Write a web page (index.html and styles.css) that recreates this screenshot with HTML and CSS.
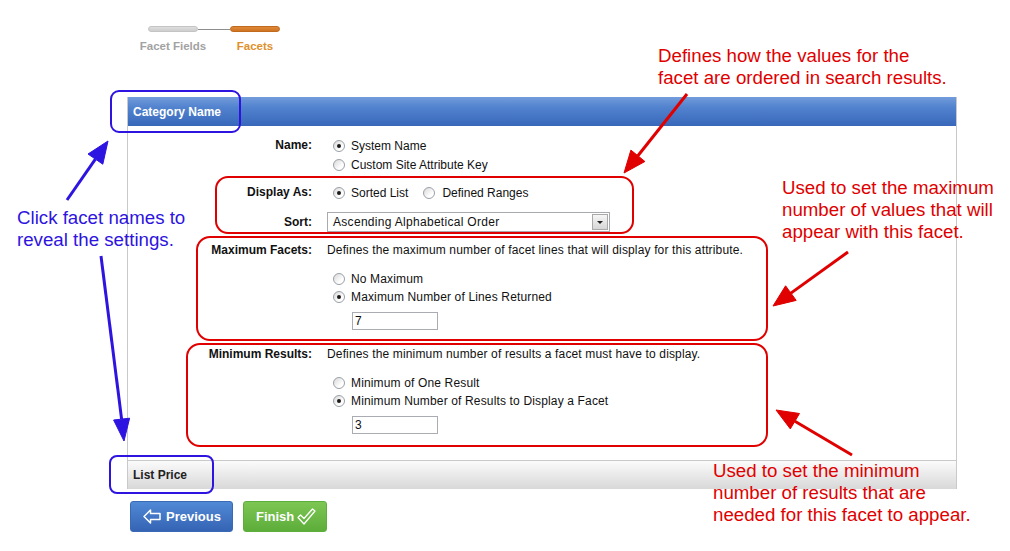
FILE: index.html
```html
<!DOCTYPE html>
<html lang="en">
<head>
<meta charset="utf-8">
<title>Facets</title>
<link rel="stylesheet" href="styles.css">
</head>
<body>
<div class="page">
  <div class="wrap">
    <div class="stepper">
      <div class="step">
        <div class="bar bar-done"></div>
        <div class="step-label">Facet Fields</div>
      </div>
      <div class="connector"></div>
      <div class="step">
        <div class="bar bar-active"></div>
        <div class="step-label step-label-active">Facets</div>
      </div>
    </div>

    <div class="panel">
      <div class="panel-head">Category Name</div>
      <div class="panel-body">
        <div class="field">
          <div class="label">Name:</div>
          <div class="control">
            <div class="opt"><span class="radio on"></span>System Name</div>
            <div class="opt"><span class="radio"></span>Custom Site Attribute Key</div>
          </div>
        </div>

        <div class="field field-display">
          <div class="label">Display As:</div>
          <div class="control">
            <div class="opt"><span class="radio on"></span>Sorted List<span class="radio radio-next"></span>Defined Ranges</div>
          </div>
        </div>

        <div class="field field-sort">
          <div class="label label-sort">Sort:</div>
          <div class="control">
            <div class="select"><span class="select-text">Ascending Alphabetical Order</span><span class="select-btn"><span class="caret"></span></span></div>
          </div>
        </div>

        <div class="field field-max">
          <div class="label">Maximum Facets:</div>
          <div class="control">
            <div class="desc">Defines the maximum number of facet lines that will display for this attribute.</div>
            <div class="opts">
              <div class="opt opt-s"><span class="radio"></span>No Maximum</div>
              <div class="opt opt-s"><span class="radio on"></span>Maximum Number of Lines Returned</div>
            </div>
            <input class="num" type="text" value="7">
          </div>
        </div>

        <div class="field field-min">
          <div class="label">Minimum Results:</div>
          <div class="control">
            <div class="desc">Defines the minimum number of results a facet must have to display.</div>
            <div class="opts">
              <div class="opt opt-s"><span class="radio"></span>Minimum of One Result</div>
              <div class="opt opt-s"><span class="radio on"></span>Minimum Number of Results to Display a Facet</div>
            </div>
            <input class="num" type="text" value="3">
          </div>
        </div>
      </div>
      <div class="panel-foot">List Price</div>
    </div>

    <div class="actions">
      <button class="btn btn-prev" type="button">
        <svg class="btn-icon" width="18" height="15" viewBox="0 0 18 15"><path d="M1 7.5 L7.5 1 L7.5 4.5 L17 4.5 L17 10.5 L7.5 10.5 L7.5 14 Z" fill="none" stroke="#fff" stroke-width="1.5" stroke-linejoin="round"/></svg>
        <span>Previous</span>
      </button>
      <button class="btn btn-finish" type="button">
        <span>Finish</span>
        <svg class="btn-icon" width="19" height="17" viewBox="0 0 19 17"><path d="M1 9.5 L3.5 7 L7 10.5 L15.5 1 L18 3 L7 16 Z" fill="none" stroke="#fff" stroke-width="1.3" stroke-linejoin="round"/></svg>
      </button>
    </div>
  </div>

  <svg class="marks" width="1010" height="551" viewBox="0 0 1010 551">
    <g fill="none" stroke="#e00000" stroke-width="2">
      <rect x="216" y="177" width="417" height="56" rx="12"/>
      <rect x="197" y="237" width="570" height="103" rx="13"/>
      <rect x="187" y="344" width="580" height="102" rx="13"/>
    </g>
    <g fill="none" stroke="#2d14e0" stroke-width="2">
      <rect x="111" y="91" width="129" height="41" rx="8"/>
      <rect x="110" y="456" width="103" height="37" rx="7"/>
    </g>
    <g stroke="#e00000" stroke-width="3" fill="#e00000">
      <line x1="687" y1="94" x2="637.9" y2="155.8"/>
      <polygon points="624,173 644.9,161.5 630.9,150.1" stroke-width="1"/>
      <line x1="848" y1="252" x2="790.9" y2="293.1"/>
      <polygon points="773,306 796.2,300.4 785.6,285.8" stroke-width="1"/>
      <line x1="852" y1="455" x2="794.9" y2="421.2"/>
      <polygon points="776,410 799.5,413.5 790.3,428.9" stroke-width="1"/>
    </g>
    <g stroke="#2d14e0" stroke-width="3" fill="#2d14e0">
      <line x1="67" y1="200" x2="95.4" y2="159.1"/>
      <polygon points="108,141 102.8,164.2 88,154" stroke-width="1"/>
      <line x1="101" y1="256" x2="121.6" y2="419.1"/>
      <polygon points="124,441 129.6,418.2 113.6,420" stroke-width="1"/>
    </g>
  </svg>

  <div class="note note-red note-sort">Defines how the values for the<br>facet are ordered in search results.</div>
  <div class="note note-red note-max">Used to set the maximum<br>number of values that will<br>appear with this facet.</div>
  <div class="note note-red note-min">Used to set the minimum<br>number of results that are<br>needed for this facet to appear.</div>
  <div class="note note-blue note-click">Click facet names to<br>reveal the settings.</div>
</div>
</body>
</html>
```

FILE: styles.css
```css
* { box-sizing: border-box; }

html, body {
  margin: 0;
  padding: 0;
  background: #fff;
}

body {
  font-family: "Liberation Sans", Arial, sans-serif;
  font-size: 12px;
  color: #000;
}

.page {
  position: relative;
  width: 1010px;
  height: 551px;
  overflow: hidden;
}

.wrap {
  margin-left: 127px;
  width: 830px;
  padding-top: 26px;
}

/* stepper */
.stepper {
  display: flex;
  align-items: flex-start;
  margin-left: 21px;
  height: 71px;
}

.step {
  width: 50px;
  display: flex;
  flex-direction: column;
  align-items: center;
}

.bar {
  width: 50px;
  height: 6px;
  border-radius: 3px;
}

.bar-done {
  background: linear-gradient(#dedede, #cdcdcd);
  border: 1px solid #c4c4c4;
}

.bar-active {
  background: linear-gradient(#e0893a, #cf7422);
  border: 1px solid #c06a1e;
}

.connector {
  width: 32px;
  height: 1px;
  margin-top: 3px;
  background: #8e8e8e;
}

.step-label {
  margin-top: 8px;
  white-space: nowrap;
  font-size: 11.5px;
  line-height: 13px;
  font-weight: bold;
  color: #a2a2a2;
}

.step-label-active {
  color: #e0902c;
}

/* panel */
.panel {
  border-left: 1px solid #c9c9c9;
  border-right: 1px solid #c9c9c9;
}

.panel-head {
  height: 29px;
  line-height: 31px;
  padding-left: 5px;
  color: #fff;
  font-weight: bold;
  background: linear-gradient(#739cdb 0%, #5283cf 35%, #3867ba 100%);
}

.panel-body {
  padding: 10px 0 26px;
  background: #fff;
}

.field {
  display: grid;
  grid-template-columns: 184px 1fr;
  column-gap: 15px;
  align-items: start;
}

.label {
  text-align: right;
  font-weight: bold;
  line-height: 19px;
  color: #111;
}

.label-sort {
  line-height: 20px;
}

.field-display { margin-top: 9px; }
.field-sort { margin-top: 10px; }
.field-max { margin-top: 9px; }
.field-min { margin-top: 15px; }

.opt {
  height: 19px;
  display: flex;
  align-items: center;
  white-space: nowrap;
  color: #111;
}

.opt-s {
  height: 18px;
}

.desc {
  line-height: 19px;
  color: #111;
  white-space: nowrap;
}

.field-max .desc,
.field-max .opt,
.field-min .desc,
.field-min .opt {
  letter-spacing: 0.15px;
}

.opts {
  margin-top: 10px;
}

.radio {
  display: inline-block;
  position: relative;
  width: 12px;
  height: 12px;
  margin: 0 6px 0 6px;
  border-radius: 50%;
  border: 1px solid #9aa0a6;
  background: linear-gradient(135deg, #d9d9d9, #ffffff 70%);
  flex: none;
}

.radio.on::after {
  content: "";
  position: absolute;
  left: 3px;
  top: 3px;
  width: 4px;
  height: 4px;
  border-radius: 50%;
  background: #1a1a1a;
}

.radio-next {
  margin-left: 15px;
  margin-right: 7px;
}

.select {
  width: 283px;
  height: 20px;
  border: 1px solid #a7abb0;
  display: flex;
  align-items: center;
  padding-left: 5px;
  color: #111;
  background: #fff;
}

.select-text {
  letter-spacing: 0.3px;
}

.select-btn {
  margin-left: auto;
  margin-right: 1px;
  width: 16px;
  height: 16px;
  border: 1px solid #a9a9a9;
  background: linear-gradient(#f6f6f6, #d6d6d6);
  display: flex;
  align-items: center;
  justify-content: center;
}

.caret {
  width: 0;
  height: 0;
  border-left: 3px solid transparent;
  border-right: 3px solid transparent;
  border-top: 3px solid #222;
}

.num {
  display: block;
  margin: 6px 0 0 25px;
  width: 86px;
  height: 18px;
  border: 1px solid #a9acb2;
  padding: 0 2px;
  font-family: "Liberation Sans", Arial, sans-serif;
  font-size: 12px;
  color: #111;
  background: #fff;
  outline: none;
}

.panel-foot {
  height: 29px;
  line-height: 28px;
  padding-left: 5px;
  border-top: 1px solid #c9c9c9;
  font-weight: bold;
  color: #222;
  background: linear-gradient(#fbfbfb, #d8d8d8);
}

/* actions */
.actions {
  display: flex;
  gap: 10px;
  margin: 12px 0 0 3px;
}

.btn {
  height: 31px;
  border-radius: 3px;
  display: flex;
  align-items: center;
  font-family: "Liberation Sans", Arial, sans-serif;
  font-size: 13px;
  font-weight: bold;
  color: #fff;
  padding: 0;
  cursor: pointer;
}

.btn-prev {
  width: 103px;
  padding-left: 12px;
  gap: 5px;
  border: 1px solid #3a69b5;
  background: linear-gradient(#5089d6, #3564b4);
}

.btn-finish {
  width: 84px;
  padding-left: 12px;
  gap: 3px;
  border: 1px solid #5eae3e;
  background: linear-gradient(#7dc653, #5dad3b);
}

.btn-icon {
  display: block;
  flex: none;
}

/* annotations */
.marks {
  position: absolute;
  left: 0;
  top: 0;
  pointer-events: none;
}

.note {
  position: absolute;
  font-size: 18.7px;
  line-height: 22px;
  white-space: nowrap;
}

.note-red { color: #e00000; }
.note-blue { color: #2d14e0; }

.note-sort { left: 658px; top: 45px; }
.note-max { left: 782px; top: 177px; }
.note-min { left: 713px; top: 460px; }
.note-click { left: 17px; top: 207px; }
```
